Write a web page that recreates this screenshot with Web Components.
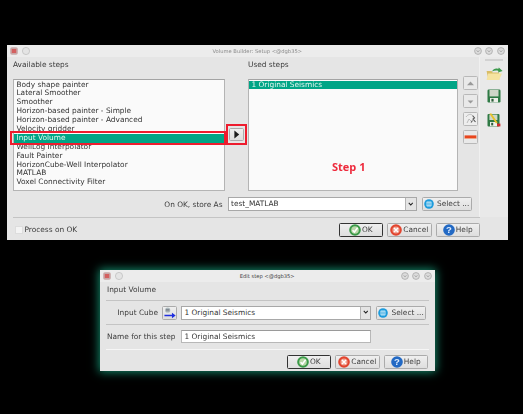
<!DOCTYPE html>
<html><head><meta charset="utf-8">
<style>
html,body{margin:0;padding:0;background:#000;}
body{width:523px;height:414px;overflow:hidden;font:7.4px/9px "DejaVu Sans",sans-serif;color:#333;}
</style></head>
<body>
<x-desktop>
  <x-window style="left:7px;top:45px;width:501px;height:195px" heading="Volume Builder: Setup <@dgb35>" kind="main">
    <x-builder></x-builder>
  </x-window>
  <x-window style="left:100px;top:270px;width:335px;height:101px" heading="Edit step <@dgb35>" kind="glow">
    <x-step-form></x-step-form>
  </x-window>
</x-desktop>
<script>
const ICONS={
 ok:`<svg viewBox="0 0 12 12" width="12" height="12"><circle cx="6" cy="6" r="5.8" fill="#3a9a48"/><circle cx="6" cy="6" r="3.8" fill="#b9d8a8"/><path d="M3.6 6.2 5.4 8 8.6 3.8" fill="none" stroke="#fff" stroke-width="1.5"/></svg>`,
 cancel:`<svg viewBox="0 0 12 12" width="12" height="12"><circle cx="6" cy="6" r="5.8" fill="#e2452f"/><circle cx="6" cy="6" r="3.6" fill="#f0a090"/><path d="M4 4 8 8M8 4 4 8" stroke="#fff" stroke-width="1.5"/></svg>`,
 help:`<svg viewBox="0 0 12 12" width="12" height="12"><circle cx="6" cy="6" r="5.8" fill="#2269c4"/><text x="6" y="9.4" font-family="Liberation Sans" font-weight="700" font-size="9.5" text-anchor="middle" fill="#dfeeff">?</text></svg>`,
 select:`<svg viewBox="0 0 10 10" width="10" height="10"><circle cx="5" cy="5" r="4.8" fill="#1d9bdc"/><rect x="2.4" y="2.6" width="5.2" height="4.8" rx=".8" fill="#bfe6f7"/><path d="M2.6 4.2h4.8M2.6 5.8h4.8" stroke="#1d9bdc" stroke-width=".6"/></svg>`,
 up:`<svg viewBox="0 0 15 13" width="15" height="13"><path d="M4 8.2 7.5 4.6 11 8.2z" fill="#9a9a9a"/></svg>`,
 down:`<svg viewBox="0 0 15 13" width="15" height="13"><path d="M4.6 5.6h5.8L7.5 8.4z" fill="#9a9a9a"/></svg>`,
 right:`<svg viewBox="0 0 15 13" width="15" height="13"><path d="M5.4 2.4 10.2 6.5 5.4 10.6z" fill="#1c1c1c"/></svg>`,
 minus:`<svg viewBox="0 0 15 14" width="15" height="14"><rect x="1.6" y="5.4" width="11.8" height="3" fill="#e8461e"/><rect x="1.6" y="8" width="11.8" height=".8" fill="#f0a080"/></svg>`,
 props:`<svg viewBox="0 0 15 14" width="15" height="14"><rect x="1" y="1" width="13" height="12" fill="#eee"/><path d="M3 5c2-3 5-3 6-2M4 11l2-4 2 2" stroke="#bbb" fill="none"/><path d="M9.5 3.5l2 2.5-1.5 1 2.5 3M8 10.5l1.5-2" stroke="#555" stroke-width="1.1" fill="none"/></svg>`,
 input:`<svg viewBox="0 0 15 14" width="14" height="13"><circle cx="5" cy="4.5" r="2.8" fill="#b8c6c8"/><path d="M3 3.6h4M3 5.2h4" stroke="#556" stroke-width=".7"/><path d="M1.5 9.4H9.6V7.2l4 3-4 3v-2.2H1.5z" fill="#1f2fe0"/></svg>`,
 folder:`<svg viewBox="0 0 17 13" width="17" height="13"><path d="M.6 4h5l1 1.4h6.6V13H2.4z" fill="#d9bd66"/><path d="M2.2 6.5H16L13 13H.6z" fill="#f5e3a0"/><path d="M6 4.6C7.2 1.8 10 1 12.2 2l.6-1.6L16.6 4l-4.6 1.4.4-1.5C10.4 3.2 8 3.6 6 4.6z" fill="#3c9a4c"/></svg>`,
 save:`<svg viewBox="0 0 14 14" width="14" height="14"><rect x=".5" y=".5" width="13" height="13" rx="1.2" fill="#2f7a45"/><rect x="2.5" y="1" width="9" height="6.4" fill="#cfd6c8"/><rect x="3" y="9" width="8" height="4.4" fill="#eef0ea"/><rect x="4.4" y="9.8" width="2.2" height="2.8" fill="#2a5c38"/></svg>`,
 saveas:`<svg viewBox="0 0 14 14" width="14" height="14"><rect x=".5" y="1" width="12" height="12.4" rx="1" fill="#2f7a45"/><rect x="2.4" y="1.6" width="8" height="5.4" fill="#cfd6c8"/><rect x="3" y="9" width="7" height="4.2" fill="#eef0ea"/><rect x="4.2" y="9.8" width="2" height="2.6" fill="#2a5c38"/><path d="M2.4.8 4.2.2 10.6 9.4 9 10.6z" fill="#e8c228"/><rect x="10" y="10.6" width="3.4" height="2.8" fill="#d22a2a"/></svg>`
};
const def=(n,css,html,init)=>customElements.define(n,class extends HTMLElement{
  constructor(){super();const s=this.attachShadow({mode:'open'});s.innerHTML=`<style>${css}</style>${html}`;}
  connectedCallback(){init&&init.call(this,this.shadowRoot);}
});
const FILTER='blur(.4px)';

def('x-desktop',`:host{display:block;position:relative;width:523px;height:414px;background:#000}`,`<slot></slot>`);

const dot=`<svg viewBox="0 0 8 8" width="8" height="8"><circle cx="4" cy="4" r="3.4" fill="#dcdcdc" stroke="#a8a8a8" stroke-width=".8"/><path d="M2.7 3.4 4 4.8 5.3 3.4" stroke="#8a8a8a" fill="none" stroke-width=".7"/></svg>`;
const closeDot=`<svg viewBox="0 0 8 8" width="8" height="8"><rect x=".2" y=".2" width="7.6" height="7.6" rx="1.8" fill="#c8a8a8"/><path d="M1.8 3 6.2 3M1.8 5 6.2 5" stroke="#d84848" stroke-width="1.5"/></svg>`;
const blank=`<svg viewBox="0 0 8 8" width="8" height="8"><circle cx="4" cy="4" r="3.6" fill="#e4e4e4" stroke="#bcbcbc" stroke-width=".7"/></svg>`;

def('x-window',`
 :host{display:flex;flex-direction:column;position:absolute;background:#e5e5e5;box-sizing:border-box;filter:${FILTER}}
 :host([kind=glow]){box-shadow:0 0 9px 1px rgba(30,225,175,.62);}
 .t{display:flex;align-items:center;height:12px;padding:0 3px;gap:4px;flex:none;background:#ececec}
 .l,.r{display:flex;gap:3.5px;align-items:center;flex:1}
 .r{justify-content:flex-end;padding-right:.5px}
 .h{font-size:5.2px;line-height:12px;color:#8a8a8a;white-space:nowrap}
 :host([kind=glow]) .h{color:#444}
 .b{flex:1;min-height:0;display:flex;flex-direction:column}
`,`<div class="t"><div class="l">${closeDot}${blank}</div><div class="h"></div><div class="r">${dot}${dot}${dot}</div></div><div class="b"><slot></slot></div>`,
 function(s){s.querySelector('.h').textContent=this.getAttribute('heading');});

def('x-label',`:host{display:block;white-space:nowrap;color:#3a3a3a}`,`<slot></slot>`);

def('x-list',`
 :host{display:block;box-sizing:border-box;position:relative;background:#fafafa;border:1px solid #b4b4b4;border-top-color:#a4a4a4;padding:.5px 0 0 0}
`,`<slot></slot>`);

def('x-row',`
 :host{display:block;height:8.9px;line-height:8.9px;padding-left:2.5px;white-space:nowrap;color:#333}
 :host([selected]){background:#00a586;color:#e6f6f1}
`,`<slot></slot>`);

def('x-mark',`
 :host{display:block;position:absolute;box-sizing:border-box;border:2.5px solid #ee1c2e;pointer-events:none}
`,``);

def('x-icon',`:host{display:inline-flex;align-items:center;justify-content:center;flex:none;line-height:0}`,`<span></span>`,
 function(s){s.querySelector('span').innerHTML=ICONS[this.getAttribute('name')];});

def('x-btn',`
 :host{display:inline-flex;align-items:center;justify-content:center;gap:1px;box-sizing:border-box;height:14px;border:1px solid #ababab;border-radius:1.5px;background:linear-gradient(#efefef,#dedede);color:#3c3c3c;white-space:nowrap;flex:none;line-height:12px}
 :host([default]){border-color:#333}
 :host([tool]){background:#e9e9e9;border-color:#b8b8b8}
`,`<slot name="i"></slot><slot></slot>`);

def('x-input',`
 :host{display:flex;align-items:center;box-sizing:border-box;height:13.5px;background:#fff;border:1px solid #b8b8b8;border-top-color:#9a9a9a;padding-left:2.5px;color:#333;white-space:nowrap;min-width:0}
`,`<slot></slot>`);

def('x-combo',`
 :host{display:flex;box-sizing:border-box;height:14px;background:#fff;border:1px solid #a8a8a8;white-space:nowrap;color:#333;min-width:0}
 .v{flex:1;padding-left:2.5px;line-height:12px}
 .a{width:9.5px;background:#e4e4e4;border-left:1px solid #b4b4b4;display:flex;align-items:center;justify-content:center}
`,`<div class="v"><slot></slot></div><div class="a"><svg viewBox="0 0 6 5" width="5.5" height="4.5"><path d="M.8 1 3 3.4 5.2 1" fill="none" stroke="#222" stroke-width="1.2"/></svg></div>`);

def('x-rule',`:host{display:block;height:1px;background:#c4c4c4;flex:none}:host([light]){background:#f6f6f6}`,``);

def('x-actions',`
 :host{display:flex;gap:4px;justify-content:flex-end;align-items:center;flex:none}
 ::slotted(x-btn){width:44.5px}
`,`<slot></slot>`);

const actions=`<x-actions>
 <x-btn default><x-icon slot="i" name="ok"></x-icon>OK</x-btn>
 <x-btn><x-icon slot="i" name="cancel"></x-icon>Cancel</x-btn>
 <x-btn><x-icon slot="i" name="help"></x-icon>Help</x-btn>
</x-actions>`;
const selectBtn=`<x-btn style="width:50px"><x-icon slot="i" name="select"></x-icon>&nbsp;Select ...</x-btn>`;

def('x-builder',`
 :host{display:flex;flex-direction:column;flex:1;font-size:7.4px}
 .top{display:flex;height:160px;flex:none}
 .main{width:473px;flex:none;box-sizing:border-box;padding-left:6px;display:flex;flex-direction:column;border-right:1px solid #f0f0f0}
 .grid{display:grid;grid-template-columns:212px 23px 210px 15px;column-gap:0;grid-template-rows:22px 112px;flex:none;position:relative}
 .lab{padding-top:1px;line-height:13px}
 .side{grid-column:4;grid-row:1/3;display:flex;flex-direction:column;gap:4px;padding-top:19px;margin-left:5px;width:15px}
 .side x-btn{width:15px;height:14px}
 .arrow{display:flex;justify-content:center;align-items:flex-start;padding-top:49px;position:relative}
 .arrow x-btn{width:15px;height:13px}
 .store{display:flex;align-items:center;height:14px;margin-top:6px;width:459px;flex:none}
 .store x-label{width:209.5px;text-align:right;flex:none}
 .store x-combo{width:189px;margin-left:5px;flex:none}
 .store x-btn{margin-left:5px}
 .tools{flex:1;display:flex;flex-direction:column;align-items:center;padding-top:2px;background:#e9e9e9}
 .grip{width:18px;height:1.5px;background:#d2d2d2;margin-bottom:6px}
 .tools x-icon{margin-bottom:9.5px}
 .bottom{flex:1;position:relative;display:flex;flex-direction:column;padding:0 28px 0 6px}
 .bar{display:flex;align-items:center;justify-content:space-between;margin-top:4.5px}
 .chk{display:flex;align-items:center;gap:2px;padding-left:1.5px}
 .box{width:6px;height:6px;background:#f4f4f4;border:.5px solid #ddd}
 .step{position:absolute;left:83px;top:80px;font:700 11px/14px "Open Sans","Noto Sans",sans-serif;color:#ee2a3c;white-space:nowrap}
 .m1{left:-4px;top:50.5px;width:216px;height:14.5px}
 .m2{left:.5px;top:44.5px;width:21px;height:21px}
`,`
<div class="top">
 <div class="main">
  <div class="grid">
   <x-label class="lab" style="grid-column:1">Available steps</x-label>
   <x-label class="lab" style="grid-column:3">Used steps</x-label>
   <x-list style="grid-column:1;grid-row:2">
    <x-row>Body shape painter</x-row>
    <x-row>Lateral Smoother</x-row>
    <x-row>Smoother</x-row>
    <x-row>Horizon-based painter - Simple</x-row>
    <x-row>Horizon-based painter - Advanced</x-row>
    <x-row>Velocity gridder</x-row>
    <x-row selected>Input Volume</x-row>
    <x-row>WellLog Interpolator</x-row>
    <x-row>Fault Painter</x-row>
    <x-row>HorizonCube-Well Interpolator</x-row>
    <x-row>MATLAB</x-row>
    <x-row>Voxel Connectivity Filter</x-row>
    <x-mark class="m1"></x-mark>
   </x-list>
   <div class="arrow" style="grid-column:2;grid-row:2">
    <x-btn><x-icon slot="i" name="right"></x-icon></x-btn>
    <x-mark class="m2"></x-mark>
   </div>
   <x-list style="grid-column:3;grid-row:2">
    <x-row selected>1 Original Seismics</x-row>
    <div class="step">Step 1</div>
   </x-list>
   <div class="side">
    <x-btn tool><x-icon slot="i" name="up"></x-icon></x-btn>
    <x-btn tool><x-icon slot="i" name="down"></x-icon></x-btn>
    <x-btn tool><x-icon slot="i" name="props"></x-icon></x-btn>
    <x-btn tool><x-icon slot="i" name="minus"></x-icon></x-btn>
   </div>
  </div>
  <div class="store">
   <x-label>On OK, store As</x-label>
   <x-combo>test_MATLAB</x-combo>
   ${selectBtn}
  </div>
 </div>
 <div class="tools">
  <div class="grip"></div>
  <x-icon name="folder"></x-icon>
  <x-icon name="save"></x-icon>
  <x-icon name="saveas"></x-icon>
 </div>
</div>
<div class="bottom">
 <x-rule></x-rule>
 <div class="bar">
  <div class="chk"><div class="box"></div><x-label>Process on OK</x-label></div>
  ${actions}
 </div>
</div>`);

def('x-step-form',`
 :host{display:flex;flex-direction:column;flex:1;padding:0 6px;font-size:7.4px}
 .title{height:18px;line-height:15px;padding-left:1px;flex:none}
 .row{display:flex;align-items:center;height:14px;flex:none}
 .lab{width:52px;text-align:right;flex:none}
 .row x-btn{flex:none}
 .pick{width:15px;margin-left:4px}
 .row x-combo{width:190px;margin-left:4px;flex:none}
 .row .sel{margin-left:5px}
 .row x-input{width:190px;margin-left:22.5px;flex:none}
 .name{white-space:nowrap;flex:none;padding-left:1px;width:51.5px}
 .foot{padding:4.5px 1px 0 0}
`,`
<div class="title"><x-label>Input Volume</x-label></div>
<x-rule></x-rule>
<div class="row" style="margin-top:4.5px">
 <x-label class="lab">Input Cube</x-label>
 <x-btn class="pick"><x-icon slot="i" name="input"></x-icon></x-btn>
 <x-combo>1 Original Seismics</x-combo>
 <span class="sel">${selectBtn}</span>
</div>
<x-rule style="margin-top:4.5px"></x-rule>
<div class="row" style="margin-top:4.5px">
 <x-label class="name">Name for this step</x-label>
 <x-input>1 Original Seismics</x-input>
</div>
<x-rule light style="margin-top:5.5px"></x-rule>
<div class="foot">${actions}</div>`);
</script>
</body></html>
